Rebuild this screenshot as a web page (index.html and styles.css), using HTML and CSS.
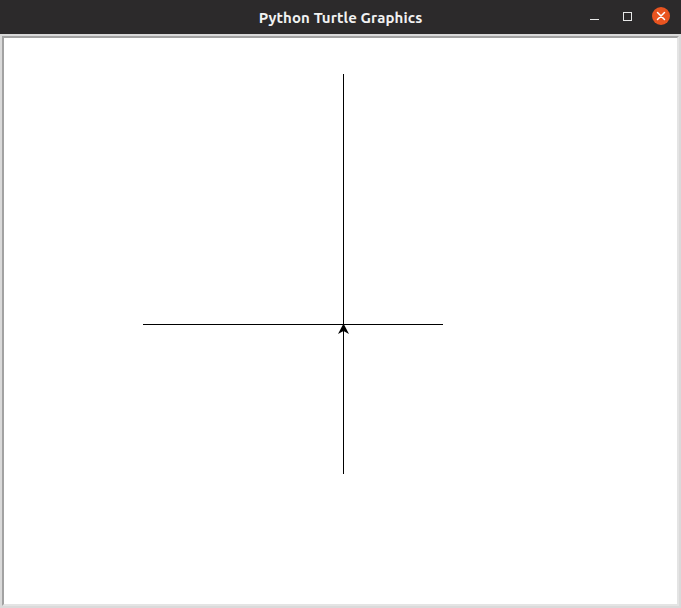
FILE: index.html
```html
<!DOCTYPE html>
<html>
<head>
<meta charset="utf-8">
<link rel="stylesheet" href="styles.css">
</head>
<body>
<div class="app">
  <div class="titlebar">
    <div class="title">Python Turtle Graphics</div>
    <div class="controls">
      <span class="btn min"></span>
      <span class="btn max"></span>
      <span class="btn close">
        <svg width="18" height="18" viewBox="0 0 18 18"><path d="M5.5 5.5 L12.5 12.5 M12.5 5.5 L5.5 12.5" stroke="#fff" stroke-width="1.5" stroke-linecap="round"/></svg>
      </span>
    </div>
  </div>
  <div class="frame">
    <div class="canvas">
      <svg class="drawing" width="681" height="608" viewBox="0 0 681 608">
        <line x1="343.5" y1="74" x2="343.5" y2="474" stroke="#000" stroke-width="1"/>
        <line x1="143" y1="324.5" x2="443" y2="324.5" stroke="#000" stroke-width="1"/>
        <polygon points="343.5,323.5 338,334 343.5,331 349,334" fill="#000"/>
      </svg>
    </div>
  </div>
</div>
</body>
</html>
```

FILE: styles.css
```css
html, body {
  margin: 0;
  padding: 0;
}
body {
  width: 681px;
  height: 608px;
  overflow: hidden;
  background: #dadada;
}
.app {
  display: flex;
  flex-direction: column;
  height: 608px;
}
.titlebar {
  height: 34px;
  background: #2c2a2b;
  display: flex;
  align-items: center;
  justify-content: center;
  position: relative;
  flex: none;
}
.title {
  color: #f2f2f2;
  font-family: "Ubuntu", "Liberation Sans", "DejaVu Sans", sans-serif;
  font-weight: bold;
  font-size: 15px;
  letter-spacing: 0.1px;
}
.controls {
  position: absolute;
  right: 11px;
  top: 7px;
  display: flex;
  align-items: center;
  gap: 0;
}
.btn {
  display: block;
  position: relative;
}
.min {
  width: 9px;
  height: 1px;
  background: #e8e8e8;
  margin-top: 6px;
  margin-right: 24px;
}
.max {
  width: 7px;
  height: 7px;
  border: 1px solid #e8e8e8;
  margin-right: 20px;
  margin-top: 0px;
}
.close {
  width: 18px;
  height: 18px;
  border-radius: 50%;
  background: #e95420;
}
.close svg {
  display: block;
}
.frame {
  flex: 1;
  padding: 2px 2px 2px 2px;
  display: flex;
  background: #dadada;
}
.canvas {
  flex: 1;
  background: #ffffff;
  border-left: 2px solid #a2a2a2;
  border-top: 2px solid #a2a2a2;
  border-right: 2px solid #e4e4e4;
  border-bottom: 2px solid #e4e4e4;
  position: relative;
  overflow: hidden;
}
.drawing {
  position: absolute;
  left: -4px;
  top: -38px;
}
```
